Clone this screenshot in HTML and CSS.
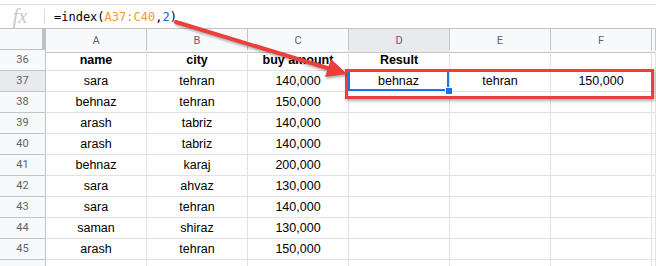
FILE: index.html
```html
<!DOCTYPE html>
<html lang="en">
<head>
    <meta charset="UTF-8">
    <title>index example</title>
    <link rel="stylesheet" href="styles.css">
</head>
<body>
    <div class="sheet">
        <div class="formula-bar">
            <div class="fx">fx</div>
            <div class="formula">=index(<span class="ref">A37:C40</span>,<span class="num">2</span>)</div>
        </div>

        <div class="grid">
            <div class="corner"></div>
            <div class="col-head">A</div>
            <div class="col-head">B</div>
            <div class="col-head">C</div>
            <div class="col-head active">D</div>
            <div class="col-head">E</div>
            <div class="col-head">F</div>
            <div class="col-head"></div>

            <div class="row-head">36</div>
            <div class="cell bold">name</div>
            <div class="cell bold">city</div>
            <div class="cell bold">buy amount</div>
            <div class="cell bold">Result</div>
            <div class="cell"></div>
            <div class="cell"></div>
            <div class="cell"></div>

            <div class="row-head active">37</div>
            <div class="cell">sara</div>
            <div class="cell">tehran</div>
            <div class="cell">140,000</div>
            <div class="cell selected">behnaz<span class="handle"></span></div>
            <div class="cell">tehran</div>
            <div class="cell">150,000</div>
            <div class="cell"></div>

            <div class="row-head">38</div>
            <div class="cell">behnaz</div>
            <div class="cell">tehran</div>
            <div class="cell">150,000</div>
            <div class="cell"></div>
            <div class="cell"></div>
            <div class="cell"></div>
            <div class="cell"></div>

            <div class="row-head">39</div>
            <div class="cell">arash</div>
            <div class="cell">tabriz</div>
            <div class="cell">140,000</div>
            <div class="cell"></div>
            <div class="cell"></div>
            <div class="cell"></div>
            <div class="cell"></div>

            <div class="row-head">40</div>
            <div class="cell">arash</div>
            <div class="cell">tabriz</div>
            <div class="cell">140,000</div>
            <div class="cell"></div>
            <div class="cell"></div>
            <div class="cell"></div>
            <div class="cell"></div>

            <div class="row-head">41</div>
            <div class="cell">behnaz</div>
            <div class="cell">karaj</div>
            <div class="cell">200,000</div>
            <div class="cell"></div>
            <div class="cell"></div>
            <div class="cell"></div>
            <div class="cell"></div>

            <div class="row-head">42</div>
            <div class="cell">sara</div>
            <div class="cell">ahvaz</div>
            <div class="cell">130,000</div>
            <div class="cell"></div>
            <div class="cell"></div>
            <div class="cell"></div>
            <div class="cell"></div>

            <div class="row-head">43</div>
            <div class="cell">sara</div>
            <div class="cell">tehran</div>
            <div class="cell">140,000</div>
            <div class="cell"></div>
            <div class="cell"></div>
            <div class="cell"></div>
            <div class="cell"></div>

            <div class="row-head">44</div>
            <div class="cell">saman</div>
            <div class="cell">shiraz</div>
            <div class="cell">130,000</div>
            <div class="cell"></div>
            <div class="cell"></div>
            <div class="cell"></div>
            <div class="cell"></div>

            <div class="row-head">45</div>
            <div class="cell">arash</div>
            <div class="cell">tehran</div>
            <div class="cell">150,000</div>
            <div class="cell"></div>
            <div class="cell"></div>
            <div class="cell"></div>
            <div class="cell"></div>

            <!-- next row, only its top edge is in view -->
            <div class="row-head"></div>
            <div class="cell"></div>
            <div class="cell"></div>
            <div class="cell"></div>
            <div class="cell"></div>
            <div class="cell"></div>
            <div class="cell"></div>
            <div class="cell"></div>
        </div>

        <!-- annotation drawn over the sheet -->
        <div class="highlight"></div>
        <svg class="arrow" width="656" height="266" viewBox="0 0 656 266">
            <line x1="176" y1="22" x2="329" y2="68.5" stroke="#ec3f3c" stroke-width="4" stroke-linecap="round"/>
            <polygon points="347,74 331,59 325,77" fill="#ec3f3c"/>
        </svg>
    </div>
</body>
</html>
```

FILE: styles.css
```css
body {
    margin: 0;
    background: #fff;
    font-family: "Liberation Sans", Arial, sans-serif;
    color: #000;
    overflow: hidden;
}
.sheet {
    position: relative;
    width: 656px;
    height: 266px;
    overflow: hidden;
}
.formula-bar {
    display: flex;
    align-items: center;
    height: 23px;
    margin-top: 4px;
    border-top: 1px solid #e0e0e0;
}
.fx {
    width: 45px;
    height: 15px;
    line-height: 15px;
    border-right: 1px solid #dadada;
    text-align: center;
    font-family: "Liberation Serif", serif;
    font-style: italic;
    font-size: 20px;
    color: #c8c8c8;
    box-sizing: border-box;
    padding-right: 4px;
}
.formula {
    padding-left: 9px;
    font-family: "DejaVu Sans Mono", monospace;
    font-size: 12px;
}
.formula .ref {
    color: #f09a35;
}
.formula .num {
    color: #1a5fd0;
}
.grid {
    display: grid;
    grid-template-columns: 46px repeat(6, 101px) 1fr;
    grid-auto-rows: 21px;
    border-top: 1px solid #c4c4c4;
}
.corner,
.col-head {
    height: 24px;
    box-sizing: border-box;
    background: #f8f9fa;
    border-bottom: 1px solid #c4c4c4;
}
.corner {
    border-right: 4px solid #c0c0c0;
    border-bottom: 4px solid #c0c0c0;
}
.col-head {
    border-right: 1px solid #c4c4c4;
    font-family: Roboto, "Liberation Sans", sans-serif;
    font-size: 11px;
    line-height: 23px;
    color: #5f6368;
    text-align: center;
}
.col-head.active {
    background: #e8eaed;
}
.row-head {
    box-sizing: border-box;
    background: #f8f9fa;
    border-right: 1px solid #c4c4c4;
    border-bottom: 1px solid #c4c4c4;
    font-family: Roboto, "Liberation Sans", sans-serif;
    font-size: 11px;
    line-height: 19px;
    color: #5f6368;
    text-align: center;
}
.row-head.active {
    background: #e8eaed;
}
.cell {
    position: relative;
    box-sizing: border-box;
    border-right: 1px solid #e2e2e2;
    border-bottom: 1px solid #e2e2e2;
    font-size: 12.5px;
    line-height: 20px;
    text-align: center;
    white-space: nowrap;
}
.cell.bold {
    font-weight: bold;
}
.cell.selected {
    box-shadow: inset 0 0 0 2px #1a73e8;
    margin: -1px 0 0 -1px;
    padding-top: 1px;
}
.handle {
    position: absolute;
    right: -4px;
    bottom: -4px;
    width: 6px;
    height: 6px;
    background: #1a73e8;
    border: 1px solid #fff;
    z-index: 2;
}
.highlight {
    position: absolute;
    left: 345px;
    top: 69px;
    width: 309px;
    height: 30px;
    box-sizing: border-box;
    border: 3px solid #ec3f3c;
    box-shadow: 1px 2px 3px rgba(0, 0, 0, 0.3);
}
.arrow {
    position: absolute;
    left: 0;
    top: 0;
    filter: drop-shadow(1px 2px 1px rgba(0, 0, 0, 0.3));
}
```
